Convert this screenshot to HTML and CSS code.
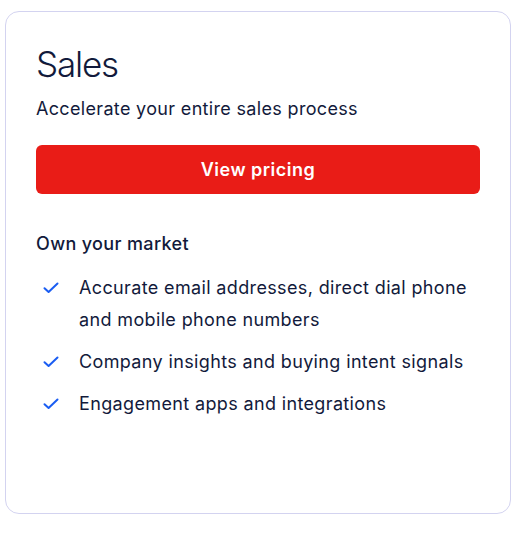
FILE: index.html
```html
<!DOCTYPE html>
<html lang="en">
<head>
<meta charset="utf-8">
<title>Sales</title>
<link rel="stylesheet" href="styles.css">
</head>
<body>
<div class="card">
  <h2 class="title">Sales</h2>
  <p class="subtitle">Accelerate your entire sales process</p>
  <a class="btn" href="#">View pricing</a>
  <h3 class="section">Own your market</h3>
  <ul class="features">
    <li><svg class="check" viewBox="0 0 16 12" width="16" height="12"><path d="M1.5 6.2 L5.6 10 L14.5 1.5" fill="none" stroke="#1a5df2" stroke-width="2" stroke-linecap="round" stroke-linejoin="round"/></svg><span>Accurate email addresses, direct dial phone and mobile phone numbers</span></li>
    <li><svg class="check" viewBox="0 0 16 12" width="16" height="12"><path d="M1.5 6.2 L5.6 10 L14.5 1.5" fill="none" stroke="#1a5df2" stroke-width="2" stroke-linecap="round" stroke-linejoin="round"/></svg><span>Company insights and buying intent signals</span></li>
    <li><svg class="check" viewBox="0 0 16 12" width="16" height="12"><path d="M1.5 6.2 L5.6 10 L14.5 1.5" fill="none" stroke="#1a5df2" stroke-width="2" stroke-linecap="round" stroke-linejoin="round"/></svg><span>Engagement apps and integrations</span></li>
  </ul>
</div>
</body>
</html>
```

FILE: styles.css
```css
* { box-sizing: border-box; }
body {
  margin: 0;
  padding: 11px 21px 0 5px;
  background: #fff;
  font-family: Inter, "Noto Sans", sans-serif;
  color: #121a3b;
}
.card {
  width: 506px;
  height: 503px;
  border: 1px solid #d3d3f0;
  border-radius: 14px;
  padding: 30px 30px 0 30px;
}
.title {
  margin: 0;
  font-size: 35px;
  font-weight: 300;
  line-height: 44px;
  letter-spacing: -1.2px;
}
.subtitle {
  margin: 9px 0 0;
  font-size: 18px;
  line-height: 28px;
  font-weight: 400;
  letter-spacing: 0.33px;
}
.btn {
  display: flex;
  align-items: center;
  justify-content: center;
  margin-top: 22px;
  height: 49px;
  width: 444px;
  background: #e91c17;
  border-radius: 6px;
  color: #fff;
  text-decoration: none;
  font-size: 18px;
  font-weight: 600;
  letter-spacing: 0.5px;
}
.section {
  margin: 38px 0 0;
  font-size: 18px;
  font-weight: 500;
  line-height: 24px;
  letter-spacing: 0.35px;
}
.features {
  list-style: none;
  margin: 16px 0 0;
  padding: 0;
  display: flex;
  flex-direction: column;
  gap: 10px;
}
.features li {
  display: flex;
  align-items: flex-start;
  font-size: 18px;
  line-height: 32px;
  letter-spacing: 0.36px;
}
.check {
  flex: none;
  margin: 10px 20px 0 7px;
}
```
